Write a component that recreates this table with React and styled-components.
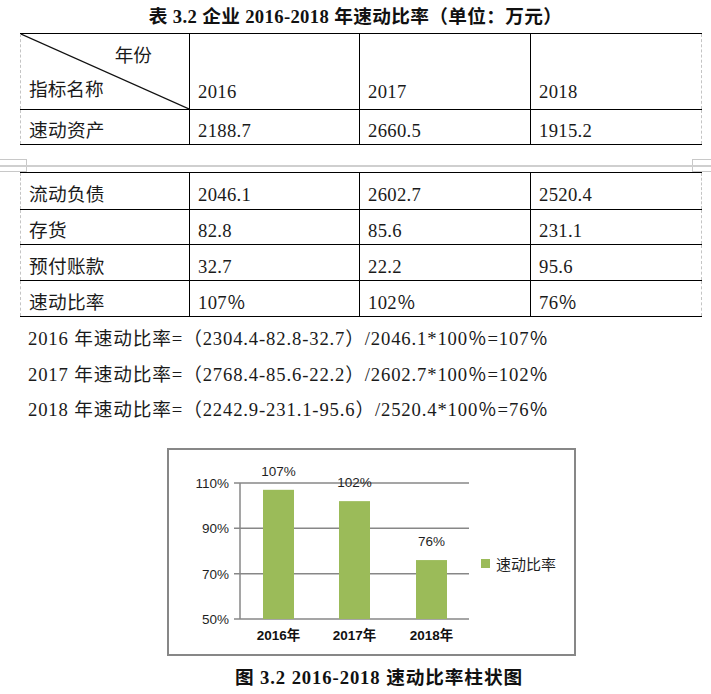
import React from 'react'
import styled, { createGlobalStyle } from 'styled-components'

const GlobalStyle = createGlobalStyle`
    html, body {
        margin: 0;
        padding: 0;
        background: #ffffff;
    }
    body {
        font-family: "Liberation Serif", "Noto Sans CJK SC", serif;
        color: #1a1a1a;
    }
`

const years = ['2016', '2017', '2018']

const topRows = [{ name: '速动资产', values: ['2188.7', '2660.5', '1915.2'] }]

const bottomRows = [
    { name: '流动负债', values: ['2046.1', '2602.7', '2520.4'], height: 37 },
    { name: '存货', values: ['82.8', '85.6', '231.1'], height: 35 },
    { name: '预付账款', values: ['32.7', '22.2', '95.6'], height: 36 },
    { name: '速动比率', values: ['107％', '102％', '76％'], height: 36 },
]

const formulas = [
    '2016 年速动比率=（2304.4-82.8-32.7）/2046.1*100％=107％',
    '2017 年速动比率=（2768.4-85.6-22.2）/2602.7*100％=102％',
    '2018 年速动比率=（2242.9-231.1-95.6）/2520.4*100％=76％',
]

const bars = [
    { label: '2016年', value: 107, x: 94 },
    { label: '2017年', value: 102, x: 170 },
    { label: '2018年', value: 76, x: 247 },
]

// y position of a percentage inside the plot (50% at bottom, 110% at top)
const yOf = (v) => 169 - ((v - 50) / 20) * 45.33

function Chart() {
    const ticks = [110, 90, 70, 50]
    return (
        <svg width='405' height='204' viewBox='0 0 405 204'>
            {ticks.map((t) => (
                <g key={t}>
                    <line x1='65' x2='300' y1={yOf(t)} y2={yOf(t)} stroke='#878787' strokeWidth='1.5' />
                    <text
                        x='60'
                        y={yOf(t) + 5}
                        textAnchor='end'
                        fontSize='13.5'
                        fontFamily='"Liberation Sans", sans-serif'
                        fill='#1f1f1f'
                    >
                        {t}%
                    </text>
                </g>
            ))}
            <line x1='71' x2='71' y1={yOf(110)} y2={yOf(50)} stroke='#878787' strokeWidth='1.5' />
            {bars.map((b) => (
                <g key={b.label}>
                    <rect x={b.x} y={yOf(b.value)} width='31' height={yOf(50) - yOf(b.value)} fill='#9bbb59' />
                    <text
                        x={b.x + 15.5}
                        y={yOf(b.value) - 14}
                        textAnchor='middle'
                        fontSize='13.5'
                        fontFamily='"Liberation Sans", sans-serif'
                        fill='#1f1f1f'
                    >
                        {b.value}%
                    </text>
                    <text
                        x={b.x + 15.5}
                        y='190'
                        textAnchor='middle'
                        fontSize='13.5'
                        fontWeight='bold'
                        fontFamily='"Liberation Sans", "Noto Sans CJK SC", sans-serif'
                        fill='#111'
                    >
                        {b.label}
                    </text>
                </g>
            ))}
            <rect x='312' y='109' width='9' height='9' fill='#9bbb59' />
            <text x='327' y='119.5' fontSize='15' fontFamily='"Noto Sans CJK SC", sans-serif' fill='#1f1f1f'>
                速动比率
            </text>
        </svg>
    )
}

function Columns() {
    return (
        <colgroup>
            <col style={{ width: 169 }} />
            <col style={{ width: 170 }} />
            <col style={{ width: 171 }} />
            <col style={{ width: 171 }} />
        </colgroup>
    )
}

function App() {
    return (
        <Page>
            <GlobalStyle />
            <Title>表 3.2 企业 2016-2018 年速动比率（单位：万元）</Title>
            <Table>
                <Columns />
                <tbody>
                    <Row height={76}>
                        <HeadCorner>
                            <Diagonal preserveAspectRatio='none' viewBox='0 0 100 100'>
                                <line x1='0' y1='0' x2='100' y2='100' stroke='#111' strokeWidth='1.2' vectorEffect='non-scaling-stroke' />
                            </Diagonal>
                            <CornerYear>年份</CornerYear>
                            <CornerName>指标名称</CornerName>
                        </HeadCorner>
                        {years.map((y, i) => (
                            <HeadCell key={y} last={i === years.length - 1}>
                                {y}
                            </HeadCell>
                        ))}
                    </Row>
                    {topRows.map((r) => (
                        <Row key={r.name} height={35}>
                            <Cell first>{r.name}</Cell>
                            {r.values.map((v, i) => (
                                <Cell key={i} last={i === r.values.length - 1}>
                                    {v}
                                </Cell>
                            ))}
                        </Row>
                    ))}
                </tbody>
            </Table>
            <PageBreak>
                <BreakMark side='left' />
                <BreakMark side='right' />
            </PageBreak>
            <Table>
                <Columns />
                <tbody>
                    {bottomRows.map((r) => (
                        <Row key={r.name} height={r.height}>
                            <Cell first>{r.name}</Cell>
                            {r.values.map((v, i) => (
                                <Cell key={i} last={i === r.values.length - 1}>
                                    {v}
                                </Cell>
                            ))}
                        </Row>
                    ))}
                </tbody>
            </Table>
            <Formulas>
                {formulas.map((f) => (
                    <FormulaLine key={f}>{f}</FormulaLine>
                ))}
            </Formulas>
            <ChartFrame>
                <Chart />
            </ChartFrame>
            <Caption>图 3.2 2016-2018 速动比率柱状图</Caption>
        </Page>
    )
}

export default App

const Page = styled.div`
    width: 711px;
    height: 694px;
    overflow: hidden;
`

const Title = styled.div`
    height: 33px;
    line-height: 34px;
    text-align: center;
    font-size: 18.67px;
    font-weight: bold;
    letter-spacing: 0.35px;
    color: #111;
`

const Table = styled.table`
    margin-left: 20px;
    width: 681px;
    border-collapse: collapse;
    table-layout: fixed;
    font-size: 18.67px;
`

const Row = styled.tr`
    height: ${(p) => p.height}px;
`

const Cell = styled.td`
    border: 1px solid #000;
    border-left: ${(p) => (p.first ? '1px dashed #c4c4c4' : '1px solid #000')};
    border-right: ${(p) => (p.last ? '1px dashed #c4c4c4' : '1px solid #000')};
    padding: 8px 8px 0 8px;
    line-height: 24px;
    letter-spacing: 0.3px;
    vertical-align: middle;
    white-space: nowrap;
`

const HeadCell = styled(Cell)`
    vertical-align: bottom;
    padding-bottom: 5px;
`

const HeadCorner = styled.td`
    position: relative;
    border: 1px solid #000;
    border-left: 1px dashed #c4c4c4;
    padding: 5px 8px 2px 8px;
    line-height: 34px;
    vertical-align: top;
`

const Diagonal = styled.svg`
    position: absolute;
    left: 0;
    top: 0;
    width: 100%;
    height: 100%;
`

const CornerYear = styled.div`
    text-align: right;
    padding-right: 29px;
`

const CornerName = styled.div`
    text-align: left;
`

const PageBreak = styled.div`
    position: relative;
    height: 27px;

    &::after {
        content: '';
        position: absolute;
        left: 0;
        right: 0;
        top: 20px;
        height: 2px;
        background: #cfcfcf;
    }
`

const BreakMark = styled.div`
    position: absolute;
    top: 14px;
    height: 13px;
    width: ${(p) => (p.side === 'left' ? '27px' : '19px')};
    ${(p) => (p.side === 'left' ? 'left: 0;' : 'right: 0;')}
    border-top: 1px solid #c8c8c8;
    border-bottom: 1px solid #c8c8c8;
    ${(p) => (p.side === 'left' ? 'border-right: 1px solid #c8c8c8;' : 'border-left: 1px solid #c8c8c8;')}
    box-sizing: border-box;
`

const Formulas = styled.div`
    margin-top: 4px;
    padding-left: 28px;
    font-size: 18.67px;
    line-height: 35.5px;
    letter-spacing: 0.85px;
`

const FormulaLine = styled.div`
    white-space: nowrap;
`

const ChartFrame = styled.div`
    margin: 20px 0 0 167px;
    width: 405px;
    height: 204px;
    border: 2px solid #878787;

    svg {
        display: block;
    }
`

const Caption = styled.div`
    height: 44px;
    line-height: 44px;
    padding-left: 47px;
    text-align: center;
    font-size: 18.67px;
    font-weight: bold;
    letter-spacing: 0.9px;
    color: #111;
`
